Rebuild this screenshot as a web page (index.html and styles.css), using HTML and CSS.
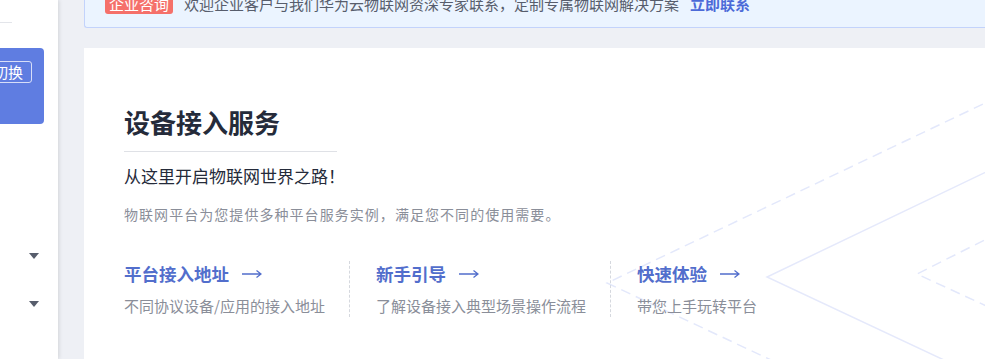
FILE: index.html
```html
<!DOCTYPE html>
<html lang="zh-CN">
<head>
    <meta charset="UTF-8">
    <meta name="viewport" content="width=device-width, initial-scale=1.0">
    <title>设备接入服务</title>
    <link rel="stylesheet" href="styles.css">
</head>
<body>
    <aside class="sidebar">
        <div class="side-line"></div>
        <div class="instance-card">
            <span class="switch-btn">切换</span>
        </div>
        <div class="nav-item"><span class="caret"></span></div>
        <div class="nav-item"><span class="caret"></span></div>
    </aside>

    <main class="main">
        <div class="notice">
            <span class="notice-tag">企业咨询</span>
            <span class="notice-text">欢迎企业客户与我们华为云物联网资深专家联系，定制专属物联网解决方案</span>
            <a class="notice-link" href="#">立即联系</a>
        </div>

        <section class="card">
            <!-- decorative background lines -->
            <svg class="card-bg" width="1000" height="400" viewBox="0 0 1000 400">
                <path d="M1000 8 L523 235 L800 365" fill="none" stroke="#e3e8fb" stroke-width="1.5" stroke-dasharray="10 6"/>
                <path d="M1000 77 L683 229 L860 312" fill="none" stroke="#e5e9fb" stroke-width="1.5"/>
                <path d="M1000 142 L833 226 L1000 303" fill="none" stroke="#e3e8fb" stroke-width="1.5" stroke-dasharray="10 6"/>
            </svg>

            <div class="card-body">
                <h1 class="card-title">设备接入服务</h1>
                <p class="card-slogan">从这里开启物联网世界之路！</p>
                <p class="card-desc">物联网平台为您提供多种平台服务实例，满足您不同的使用需要。</p>

                <div class="entries">
                    <div class="entry">
                        <a class="entry-title" href="#">平台接入地址<svg class="arrow" width="20" height="10" viewBox="0 0 20 10"><path d="M0 5 H19 M14.5 1.5 L19 5 L14.5 8.5" fill="none" stroke="currentColor" stroke-width="1.3"/></svg></a>
                        <p class="entry-sub">不同协议设备/应用的接入地址</p>
                    </div>
                    <div class="entry">
                        <a class="entry-title" href="#">新手引导<svg class="arrow" width="20" height="10" viewBox="0 0 20 10"><path d="M0 5 H19 M14.5 1.5 L19 5 L14.5 8.5" fill="none" stroke="currentColor" stroke-width="1.3"/></svg></a>
                        <p class="entry-sub">了解设备接入典型场景操作流程</p>
                    </div>
                    <div class="entry">
                        <a class="entry-title" href="#">快速体验<svg class="arrow" width="20" height="10" viewBox="0 0 20 10"><path d="M0 5 H19 M14.5 1.5 L19 5 L14.5 8.5" fill="none" stroke="currentColor" stroke-width="1.3"/></svg></a>
                        <p class="entry-sub">带您上手玩转平台</p>
                    </div>
                </div>
            </div>
        </section>
    </main>
</body>
</html>
```

FILE: styles.css
```css
body {
    margin: 0;
    height: 100vh;
    overflow: hidden;
    display: flex;
    font-family: "Noto Sans CJK SC", "Noto Sans", sans-serif;
    background-color: #eef0f5;
    color: #252b3a;
}

/* Left navigation (cut off by the viewport) */
.sidebar {
    width: 58px;
    flex-shrink: 0;
    background-color: #fff;
    box-shadow: 1px 0 4px rgba(0, 0, 0, 0.12);
    display: flex;
    flex-direction: column;
    position: relative;
    z-index: 2;
}
.side-line {
    width: 12px;
    height: 22px;
    border-bottom: 1px solid #e3e5ea;
}
.instance-card {
    margin-top: 25px;
    width: 44px;
    height: 76px;
    background-color: #5f7de1;
    border-radius: 0 4px 4px 0;
    overflow: hidden;
}
.switch-btn {
    display: block;
    box-sizing: border-box;
    margin: 13px 0 0 -10px;
    width: 42px;
    height: 22px;
    padding-right: 8px;
    border: 1px solid rgba(255, 255, 255, 0.75);
    border-radius: 3px;
    color: #fff;
    font-size: 15px;
    line-height: 20px;
    text-align: right;
}
.nav-item {
    height: 48px;
    display: flex;
    align-items: center;
    justify-content: flex-end;
    padding-right: 19px;
}
.instance-card + .nav-item {
    margin-top: 108px;
}
.caret {
    width: 0;
    height: 0;
    border-left: 5px solid transparent;
    border-right: 5px solid transparent;
    border-top: 6px solid #575d6c;
}

/* Main area */
.main {
    flex: 1;
    padding-left: 26px;
    display: flex;
    flex-direction: column;
    min-width: 0;
}
.notice {
    margin-top: -22px;
    height: 48px;
    display: flex;
    align-items: center;
    padding-left: 20px;
    background-color: #ebf4ff;
    border: 1px solid #c3d3fb;
    border-right: none;
    border-radius: 3px 0 0 3px;
    font-size: 15px;
    white-space: nowrap;
}
.notice-tag {
    background-color: #f5706a;
    color: #fff;
    padding: 0 4px;
    line-height: 21px;
    border-radius: 3px;
}
.notice-text {
    margin-left: 11px;
    color: #575d6c;
}
.notice-link {
    margin-left: 11px;
    color: #4c6ad8;
    font-weight: bold;
    text-decoration: none;
}

.card {
    margin-top: 20px;
    flex: 1;
    background-color: #fff;
    position: relative;
    overflow: hidden;
}
.card-bg {
    position: absolute;
    top: 0;
    left: 0;
}
.card-body {
    position: relative;
    padding: 54px 0 0 40px;
}
.card-title {
    margin: 0;
    display: inline-block;
    font-size: 26px;
    line-height: 40px;
    font-weight: bold;
    color: #252b3a;
    width: 213px;
    padding-bottom: 9px;
    border-bottom: 1px solid #dfe1e6;
}
.card-slogan {
    margin: 11px 0 0;
    font-size: 17px;
    line-height: 26px;
    color: #252b3a;
}
.card-desc {
    margin: 14px 0 0;
    font-size: 14px;
    line-height: 22px;
    color: #8a8e99;
    letter-spacing: 1.05px;
}

.entries {
    margin-top: 36px;
    display: flex;
}
.entry {
    padding: 0 24px 0 26px;
    border-left: 1px dashed #d5d8de;
}
.entry:first-child {
    padding-left: 0;
    border-left: none;
}
.entry-title {
    display: flex;
    align-items: center;
    font-size: 17.5px;
    line-height: 26px;
    font-weight: bold;
    color: #526ecc;
    text-decoration: none;
}
.arrow {
    margin-left: 13px;
}
.entry-sub {
    margin: 8px 0 0;
    font-size: 15px;
    line-height: 22px;
    color: #8a8e99;
}
```
